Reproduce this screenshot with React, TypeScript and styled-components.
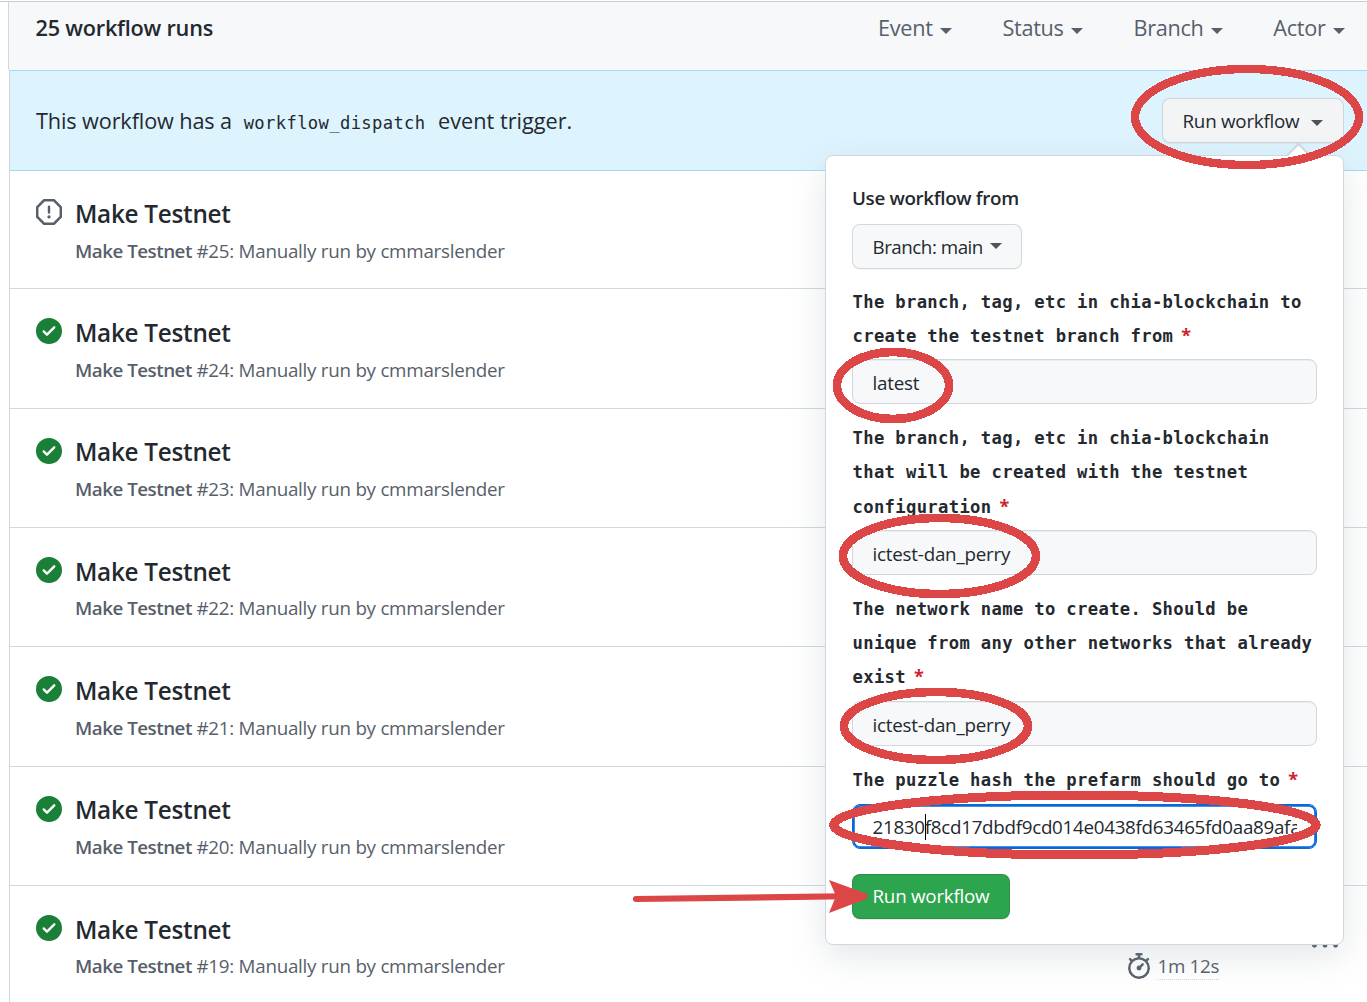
import React from 'react';
import styled, { createGlobalStyle, css } from 'styled-components';

const sans = '"Open Sans", "Noto Sans", sans-serif';
const mono = '"DejaVu Sans Mono", "Liberation Mono", monospace';

const color = {
  text: '#24292f',
  muted: '#57606a',
  border: '#d0d7de',
  subtle: '#f6f8fa',
  green: '#1a7f37',
  primary: '#2da44e',
  focus: '#0969da',
  danger: '#cf222e',
  marker: '#dc4646',
};

const GlobalStyle = createGlobalStyle`
  *, *::before, *::after { box-sizing: border-box; }
  body { margin: 0; background: #fff; }
`;

const Page = styled.main`
  position: relative;
  width: 1367px;
  height: 1002px;
  overflow: hidden;
  padding-top: 1px;
  font-family: ${sans};
  color: ${color.text};
`;

const TopRule = styled.div`
  height: 1px;
  background: #c9cdd1;
`;

const Header = styled.header`
  display: flex;
  align-items: flex-start;
  justify-content: space-between;
  height: 68px;
  margin-left: 8px;
  padding: 10px 22.4px 0 26.5px;
  border-left: 1px solid ${color.border};
  background: ${color.subtle};
  line-height: 32px;
`;

const RunCount = styled.h1`
  margin: 0;
  font-size: 21.7px;
  font-weight: 600;
  line-height: 32px;
  letter-spacing: -0.22px;
`;

const Filters = styled.nav`
  display: flex;
  gap: 50.8px;
`;

const Filter = styled.a`
  display: flex;
  align-items: center;
  color: ${color.muted};
  font-size: 21.7px;
  letter-spacing: -0.3px;
`;

const Caret = styled.span<{ $gap?: number; $lift?: number }>`
  width: 0;
  height: 0;
  margin-left: ${(p) => p.$gap ?? 7}px;
  margin-top: ${(p) => p.$lift ?? 5}px;
  border: 6.4px solid transparent;
  border-top-color: currentColor;
  border-bottom: 0;
`;

const Body = styled.div`
  height: 932px;
  margin-left: 9px;
  border-left: 1px solid ${color.border};
`;

const Banner = styled.section`
  position: relative;
  display: flex;
  align-items: center;
  justify-content: space-between;
  height: 101px;
  padding: 0 23px 0 26px;
  border: solid #a5d8fb;
  border-width: 1px 0;
  background: #ddf4ff;
`;

const Sentence = styled.p`
  margin: 2px 0 0;
  font-size: 21.7px;
  line-height: 32px;
  letter-spacing: -0.13px;
  white-space: nowrap;
`;

const Trigger = styled.span`
  letter-spacing: 0;
`;

const Code = styled.code`
  padding: 0 7px 0 6.2px;
  font-family: ${mono};
  font-size: 17.2px;
  letter-spacing: 0.35px;
`;

const Button = styled.button<{
  $variant?: 'primary' | 'active';
  $width: number;
  $tracking?: number;
}>`
  display: flex;
  flex: none;
  align-items: center;
  width: ${(p) => p.$width}px;
  height: 45px;
  padding: 0 19.5px;
  border: 1px solid rgba(27, 31, 36, 0.15);
  border-radius: 8px;
  background: ${(p) =>
    p.$variant === 'primary' ? color.primary : p.$variant === 'active' ? '#f3f4f6' : color.subtle};
  box-shadow: 0 1px 0 rgba(27, 31, 36, ${(p) => (p.$variant === 'primary' ? 0.1 : 0.04)});
  color: ${(p) => (p.$variant === 'primary' ? '#fff' : color.text)};
  font-family: ${sans};
  font-size: 18.8px;
  letter-spacing: ${(p) => p.$tracking ?? -0.24}px;
  white-space: nowrap;
`;

const ButtonCaret = styled(Caret)`
  opacity: 0.8;
`;

const Popover = styled.form`
  position: absolute;
  z-index: 2;
  top: 84px;
  right: 23px;
  display: flex;
  flex-direction: column;
  align-items: flex-start;
  width: 519px;
  height: 790px;
  padding: 27px 26px 0;
  border: 1px solid ${color.border};
  border-radius: 8px;
  background: #fff;
  box-shadow: 0 11px 34px rgba(140, 149, 159, 0.24);
`;

const Pointer = styled.span`
  position: absolute;
  top: -10px;
  right: 36px;
  width: 17px;
  height: 17px;
  border: solid ${color.border};
  border-width: 2px 0 0 2px;
  background: linear-gradient(135deg, #fff 50%, transparent 50%);
  transform: rotate(45deg);
`;

const PopoverTitle = styled.p`
  margin: 0 0 11px;
  font-size: 18.8px;
  font-weight: 600;
  line-height: 30px;
  letter-spacing: -0.33px;
`;

const Fields = styled.div`
  display: flex;
  flex: none;
  flex-direction: column;
  gap: 17.2px;
  width: 100%;
  margin-top: 15.6px;
`;

const Field = styled.label`
  display: flex;
  flex-direction: column;
  gap: 6.4px;
`;

const Label = styled.span`
  padding-left: 0.5px;
  font-family: ${mono};
  font-size: 17.2px;
  font-weight: 700;
  line-height: 34.1px;
  letter-spacing: 0.345px;
  white-space: nowrap;
`;

const Required = styled.span`
  margin-left: 8px;
  color: ${color.danger};
  font-family: ${sans};
  font-weight: 700;
  font-size: 18px;
  line-height: 20px;
`;

const Input = styled.span<{ $focused?: boolean }>`
  display: flex;
  align-items: center;
  height: 45px;
  padding: 2.4px 19.5px 0;
  border: 1px solid ${color.border};
  border-radius: 8px;
  background: ${color.subtle};
  box-shadow: inset 0 1px 0 rgba(208, 215, 222, 0.3);
  font-size: 18.8px;
  letter-spacing: -0.22px;
  ${(p) =>
    p.$focused &&
    css`
      padding-top: 1px;
      border-color: ${color.focus};
      background: #fff;
      box-shadow: inset 0 0 0 1.8px ${color.focus};
      letter-spacing: -0.285px;
    `}
`;

const InputText = styled.span`
  flex: 1;
  overflow: hidden;
  line-height: 30px;
  white-space: nowrap;
`;

const TextCursor = styled.span`
  display: inline-block;
  width: 1px;
  height: 26px;
  margin-right: -1px;
  background: #000;
  vertical-align: -6px;
`;

const Submit = styled.div`
  margin-top: 25.3px;
`;

const List = styled.ul`
  margin: 0;
  padding: 0;
  list-style: none;
`;

const Run = styled.li`
  display: flex;
  align-items: flex-start;
  height: 119.3px;
  padding: 29px 0 0 26px;
  border-top: 1px solid ${color.border};

  &:first-child {
    height: 117.45px;
    padding-top: 28.15px;
    border-top: 0;
  }
`;

const RunInfo = styled.div`
  flex: none;
  width: 1063.5px;
  padding-left: 13px;
`;

const RunTitle = styled.h2`
  margin: -2.4px 0 0;
  font-size: 24.3px;
  font-weight: 600;
  line-height: 34px;
  letter-spacing: -0.27px;
`;

const RunMeta = styled.p`
  margin: 4.8px 0 0;
  color: ${color.muted};
  font-size: 18.8px;
  line-height: 30px;
  letter-spacing: -0.26px;
`;

const RunName = styled.strong`
  font-weight: 600;
  letter-spacing: -0.5px;
`;

const Duration = styled.div`
  display: flex;
  flex: none;
  align-items: center;
  gap: 6px;
  width: 186px;
  padding-top: 37.5px;
  color: ${color.muted};
`;

const DurationText = styled.span`
  margin-top: 2px;
  border-bottom: 1px dotted ${color.border};
  font-size: 18.8px;
  line-height: 25px;
  letter-spacing: -0.3px;
`;

const Icon = styled.svg`
  display: block;
  flex: none;
  width: 26px;
  height: 26px;
  fill: currentColor;
`;

const StatusIcon = styled(Icon)<{ $done: boolean }>`
  color: ${(p) => (p.$done ? color.green : color.muted)};
`;

const MenuIcon = styled(Icon)`
  margin-top: 17.7px;
  color: ${color.muted};
`;

const Annotations = styled.svg`
  position: absolute;
  z-index: 3;
  inset: 0;
  pointer-events: none;
  fill: none;
  stroke: ${color.marker};
`;

const runs = [
  { id: 25, done: false },
  { id: 24, done: true },
  { id: 23, done: true },
  { id: 22, done: true },
  { id: 21, done: true },
  { id: 20, done: true },
  { id: 19, done: true, duration: '1m 12s' },
];

const fields = [
  {
    lines: ['The branch, tag, etc in chia-blockchain to', 'create the testnet branch from'],
    value: 'latest',
  },
  {
    lines: ['The branch, tag, etc in chia-blockchain', 'that will be created with the testnet', 'configuration'],
    value: 'ictest-dan_perry',
  },
  {
    lines: ['The network name to create. Should be', 'unique from any other networks that already', 'exist'],
    value: 'ictest-dan_perry',
  },
];

const CHECK =
  'M8 16A8 8 0 1 0 8 0a8 8 0 0 0 0 16Zm3.78-9.72a.75.75 0 0 0-1.06-1.06L6.75 9.19 5.28 7.72a.75.75 0 0 0-1.06 1.06l2 2a.75.75 0 0 0 1.06 0l4.5-4.5Z';
const STOP =
  'M4.47.22A.75.75 0 0 1 5 0h6c.199 0 .389.079.53.22l4.25 4.25c.141.14.22.331.22.53v6a.75.75 0 0 1-.22.53l-4.25 4.25A.75.75 0 0 1 11 16H5a.75.75 0 0 1-.53-.22L.22 11.53A.75.75 0 0 1 0 11V5c0-.199.079-.389.22-.53Zm.84 1.28L1.5 5.31v5.38l3.81 3.81h5.38l3.81-3.81V5.31L10.69 1.5ZM8 4a.75.75 0 0 1 .75.75v3.5a.75.75 0 0 1-1.5 0v-3.5A.75.75 0 0 1 8 4Zm0 8a1 1 0 1 1 0-2 1 1 0 0 1 0 2Z';
const STOPWATCH =
  'M5.75.75A.75.75 0 0 1 6.5 0h3a.75.75 0 0 1 0 1.5h-.75v1l-.001.041a6.724 6.724 0 0 1 3.464 1.435l.007-.006.75-.75a.749.749 0 0 1 1.275.326.749.749 0 0 1-.215.734l-.75.75-.006.007a6.75 6.75 0 1 1-10.548 0L2.72 5.03l-.75-.75a.751.751 0 0 1 .018-1.042.751.751 0 0 1 1.042-.018l.75.75.007.006A6.72 6.72 0 0 1 7.25 2.541V1.5H6.5a.75.75 0 0 1-.75-.75ZM8 14.5a5.25 5.25 0 1 0-.001-10.501A5.25 5.25 0 0 0 8 14.5Zm.389-6.7 1.33-1.33a.75.75 0 1 1 1.061 1.06L9.45 8.861A1.503 1.503 0 0 1 8 10.75a1.499 1.499 0 1 1 .389-2.95Z';
const KEBAB = 'M8 9a1.5 1.5 0 1 0 0-3 1.5 1.5 0 0 0 0 3ZM1.5 9a1.5 1.5 0 1 0 0-3 1.5 1.5 0 0 0 0 3Zm13 0a1.5 1.5 0 1 0 0-3 1.5 1.5 0 0 0 0 3Z';

function LabelLines({ lines }: { lines: string[] }) {
  return (
    <Label>
      {lines.map((line, i) => (
        <React.Fragment key={line}>
          {i > 0 && <br />}
          {line}
        </React.Fragment>
      ))}
      <Required>*</Required>
    </Label>
  );
}

function DispatchForm() {
  return (
    <Popover>
      <Pointer />
      <PopoverTitle>Use workflow from</PopoverTitle>
      <Button type="button" $width={170} $tracking={-0.48}>
        Branch: main
        <ButtonCaret $gap={7} $lift={-2} />
      </Button>
      <Fields>
        {fields.map((f) => (
          <Field key={f.lines.join(' ')}>
            <LabelLines lines={f.lines} />
            <Input>{f.value}</Input>
          </Field>
        ))}
        <Field>
          <LabelLines lines={['The puzzle hash the prefarm should go to']} />
          <Input $focused>
            <InputText>
              21830
              <TextCursor />
              f8cd17dbdf9cd014e0438fd63465fd0aa89afa
            </InputText>
          </Input>
        </Field>
      </Fields>
      <Submit>
        <Button type="button" $variant="primary" $width={158}>
          Run workflow
        </Button>
      </Submit>
    </Popover>
  );
}

export default function App() {
  return (
    <Page>
      <GlobalStyle />
      <TopRule />
      <Header>
        <RunCount>25 workflow runs</RunCount>
        <Filters>
          {['Event', 'Status', 'Branch', 'Actor'].map((name) => (
            <Filter key={name}>
              {name}
              <Caret />
            </Filter>
          ))}
        </Filters>
      </Header>
      <Body>
        <Banner>
          <Sentence>
            This workflow has a <Code>workflow_dispatch</Code> <Trigger>event trigger.</Trigger>
          </Sentence>
          <Button type="button" $variant="active" $width={182}>
            Run workflow
            <ButtonCaret $gap={12} $lift={4} />
          </Button>
          <DispatchForm />
        </Banner>
        <List>
          {runs.map((run) => (
            <Run key={run.id}>
              <StatusIcon $done={run.done} viewBox="0 0 16 16">
                <path fillRule="evenodd" d={run.done ? CHECK : STOP} />
              </StatusIcon>
              <RunInfo>
                <RunTitle>Make Testnet</RunTitle>
                <RunMeta>
                  <RunName>Make Testnet</RunName> #{run.id}: Manually run by cmmarslender
                </RunMeta>
              </RunInfo>
              {run.duration && (
                <>
                  <Duration>
                    <Icon viewBox="0 0 16 16">
                      <path fillRule="evenodd" d={STOPWATCH} />
                    </Icon>
                    <DurationText>{run.duration}</DurationText>
                  </Duration>
                  <MenuIcon viewBox="0 0 16 16">
                    <path d={KEBAB} />
                  </MenuIcon>
                </>
              )}
            </Run>
          ))}
        </List>
      </Body>
      <Annotations width="1367" height="1002" viewBox="0 0 1367 1002" shapeRendering="crispEdges">
        <ellipse cx="1247" cy="117" rx="112" ry="48" strokeWidth="8.4" />
        <ellipse cx="893" cy="385.5" rx="56" ry="33.5" strokeWidth="8.6" />
        <ellipse cx="939.5" cy="556" rx="96.5" ry="38" strokeWidth="8.6" />
        <ellipse cx="936" cy="726" rx="92" ry="34" strokeWidth="8.6" />
        <ellipse cx="1075" cy="825" rx="241.3" ry="30" strokeWidth="9" />
        <g shapeRendering="auto">
          <path d="M636 899 L864.5 896" strokeWidth="6.2" strokeLinecap="round" />
          <path d="M829 880 L866 893.5 V899 L829 913 L836 896 Z" fill={color.marker} stroke="none" />
        </g>
      </Annotations>
    </Page>
  );
}
